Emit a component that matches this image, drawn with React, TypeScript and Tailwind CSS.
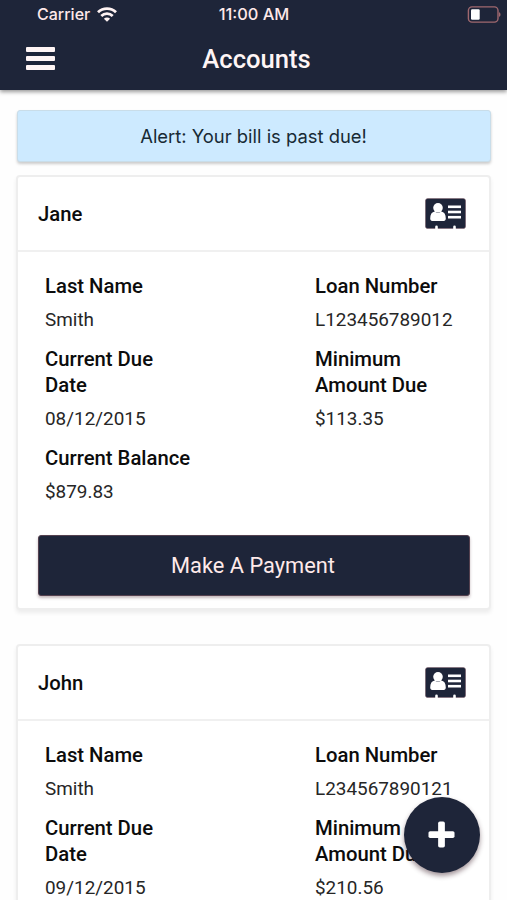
type Account = {
  id: number;
  name: string;
  lastName: string;
  loanNumber: string;
  dueDate: string;
  minimumDue: string;
  balance?: string;
};

const ACCOUNTS: Account[] = [
  {
    id: 0,
    name: 'Jane',
    lastName: 'Smith',
    loanNumber: 'L123456789012',
    dueDate: '08/12/2015',
    minimumDue: '$113.35',
    balance: '$879.83',
  },
  {
    id: 1,
    name: 'John',
    lastName: 'Smith',
    loanNumber: 'L234567890121',
    dueDate: '09/12/2015',
    minimumDue: '$210.56',
  },
];

function WifiIcon() {
  return (
    <svg viewBox="0 0 20 15" className="w-5 h-[15px]" fill="none" stroke="#fff3f3" strokeWidth="2.8">
      <path d="M1 5.2a13 13 0 0 1 18 0" />
      <path d="M4.3 8.9a8.2 8.2 0 0 1 11.4 0" />
      <path d="M10 14.8l-3.1-3.1a4.4 4.4 0 0 1 6.2 0z" fill="#fff3f3" stroke="none" />
    </svg>
  );
}

function BatteryIcon() {
  return (
    <svg viewBox="0 0 34 17" className="w-[34px] h-[17px]">
      <rect x="1.4" y="0.9" width="29.6" height="15.2" rx="3.6" fill="none" stroke="#a0686f" strokeWidth="1.4" />
      <rect x="4" y="3.2" width="8.7" height="10.6" rx="1.2" fill="#fff" />
      <path d="M32 6.2c2 .7 2 3.9 0 4.6z" fill="#a0686f" />
    </svg>
  );
}

function IdCardIcon() {
  return (
    <svg viewBox="0 0 41 31" className="w-[41px] h-[31px]">
      <rect x="0.4" y="0.4" width="40.2" height="30.2" rx="2.6" fill="#1e2539" stroke="#7d5a66" strokeWidth="0.5" />
      <g fill="#fff">
        <circle cx="13" cy="9.8" r="4.8" />
        <path d="M5.2 20.6c0-4.2 1.6-6.6 4.6-7 2 1.6 4.4 1.6 6.4 0 3 .4 4.6 2.8 4.6 7 0 1.4-.8 2.4-2 2.4H7.200c-1.200 0-2-1-2-2.400z" />
        <rect x="23" y="7.5" width="13" height="2.6" />
        <rect x="23" y="12.7" width="13" height="2.6" />
        <rect x="23" y="17.9" width="13" height="2.6" />
        <path d="M10.2 31v-2.200a1.300 1.300 0 0 1 2.600 0V31zM28.200 31v-2.200a1.300 1.300 0 0 1 2.600 0V31z" />
      </g>
    </svg>
  );
}

function Field({ label, value }: { label: string; value: string }) {
  return (
    <div className="mb-[13px]">
      <dt className="text-[20.3px] leading-[26px] font-medium text-[#0c0c0c]">{label}</dt>
      <dd className="mt-2 text-[18.9px] leading-[26px] text-[#262626]">{value}</dd>
    </div>
  );
}

function AccountCard({ account }: { account: Account }) {
  return (
    <section className="h-[435px] flex flex-col rounded-[4px] border-2 border-[#eeeeee] bg-white shadow-[0_3px_4px_rgba(0,0,0,0.07)]">
      <header className="h-[75px] shrink-0 flex items-center justify-between pl-5 pr-[23px] border-b-2 border-[#f0f0f0]">
        <h2 className="pt-px text-[20.3px] leading-[26px] font-medium text-[#0c0c0c]">{account.name}</h2>
        <IdCardIcon />
      </header>
      <dl className="grid grid-cols-[270px_1fr] pl-[27px] pt-[21px]">
        <div className="w-[150px]">
          <Field label="Last Name" value={account.lastName} />
          <div className="w-[120px]">
            <Field label="Current Due Date" value={account.dueDate} />
          </div>
          {account.balance && <Field label="Current Balance" value={account.balance} />}
        </div>
        <div className="w-[140px]">
          <Field label="Loan Number" value={account.loanNumber} />
          <Field label="Minimum Amount Due" value={account.minimumDue} />
        </div>
      </dl>
      {account.balance && (
        <button className="mt-auto mb-3 ml-5 mr-[19px] h-[61px] shrink-0 rounded-[3px] bg-[#1e2539] border border-[#54414f] pt-0.5 pr-0.5 text-[21.8px] text-[#ffeaea] shadow-[0_2px_3px_rgba(60,20,30,0.3)]">
          Make A Payment
        </button>
      )}
    </section>
  );
}

export default function App() {
  return (
    <div className="relative h-[900px] w-[507px] overflow-hidden bg-[#fefefe] font-['Roboto',sans-serif]">
      <div className="h-[90px] bg-[#1e2539] shadow-[0_2px_4px_rgba(0,0,0,0.4)]">
        {/* Status bar */}
        <div className="grid grid-cols-3 items-center h-[29px] pl-[37px] pr-[6px] font-['Inter',sans-serif] text-[16px] font-medium text-[#ffe9e9]">
          <div className="flex items-center gap-[7px] -mt-px">
            Carrier <WifiIcon />
          </div>
          <div className="-mt-px text-center -ml-[30px] text-[16.4px]">11:00 AM</div>
          <div className="flex justify-end -mt-px">
            <BatteryIcon />
          </div>
        </div>

        {/* Title bar */}
        <div className="grid grid-cols-[1fr_auto_1fr] items-center h-[60px] pl-[26px] pr-5">
          <button aria-label="Menu" className="flex flex-col gap-[4px] w-[29px] -mt-px">
            <span className="h-[5px] rounded-[1px] bg-[#fff5f5]" />
            <span className="h-[5px] rounded-[1px] bg-[#fff5f5]" />
            <span className="h-[5px] rounded-[1px] bg-[#fff5f5]" />
          </button>
          <h1 className="text-[25.6px] font-medium text-[#fff5f5]">Accounts</h1>
        </div>
      </div>

      <main className="px-4 pt-5">
        <div className="h-[52px] ml-px pt-0.5 pr-px flex items-center justify-center rounded-[3px] border border-[#c9dde9] bg-[#cdeaff] font-['Inter',sans-serif] text-[18.4px] text-[#182a35] shadow-[0_2px_3px_rgba(0,0,0,0.2)]">
          Alert: Your bill is past due!
        </div>
        <div className="mt-[13px] flex flex-col gap-[34px]">
          {ACCOUNTS.map((account) => (
            <AccountCard key={account.id} account={account} />
          ))}
        </div>
      </main>

      {/* Floating add button */}
      <button
        aria-label="Add account"
        className="absolute left-[404px] top-[797px] size-[76px] flex items-center justify-center rounded-full bg-[#1e2539] shadow-[0_3px_5px_rgba(50,20,30,0.45)]"
      >
        <svg viewBox="0 0 28 28" className="size-[27px] -mt-0.5 -ml-px" fill="#fff">
          <rect x="10.5" y="0.5" width="7" height="27" rx="1.8" />
          <rect x="0.5" y="10.5" width="27" height="7" rx="1.8" />
        </svg>
      </button>
    </div>
  );
}
